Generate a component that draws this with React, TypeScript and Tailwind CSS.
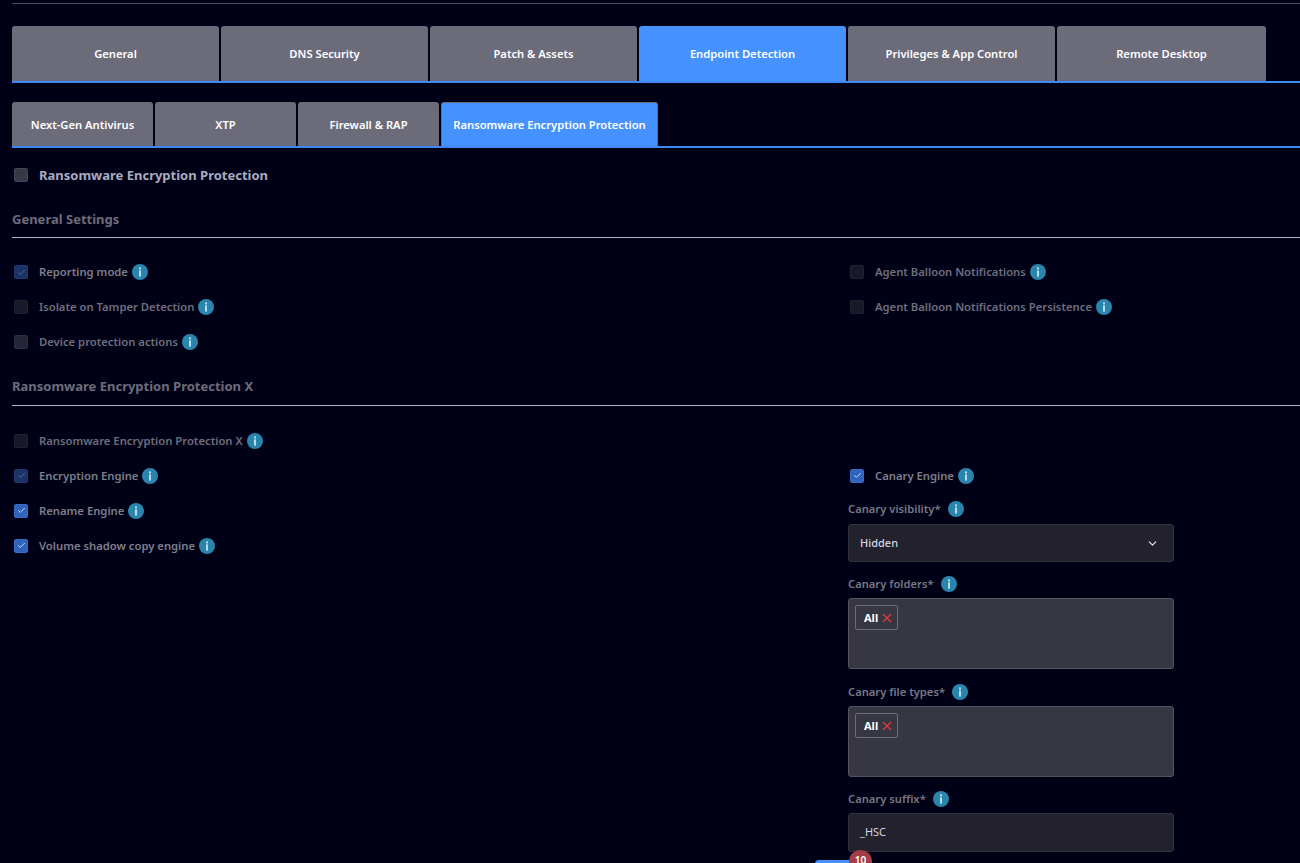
import { ChevronDown, Check } from "lucide-react";

const mainTabs = ["General", "DNS Security", "Patch & Assets", "Endpoint Detection", "Privileges & App Control", "Remote Desktop"];
const subTabs = [
	{ name: "Next-Gen Antivirus", width: "w-[141px]" },
	{ name: "XTP", width: "w-[141px]" },
	{ name: "Firewall & RAP", width: "w-[141px]" },
	{ name: "Ransomware Encryption Protection", width: "w-[217px]" },
];

const Info = ({ className = "" }: { className?: string }) => (
	<span className={`flex h-4 w-4 shrink-0 items-center justify-center rounded-full bg-[#2a85ad] ${className}`}>
		<svg width="16" height="16" viewBox="0 0 16 16" aria-hidden="true">
			<rect x="7" y="3.4" width="2" height="2" fill="#b9dcea" />
			<rect x="7" y="6.4" width="2" height="6.2" fill="#b9dcea" />
		</svg>
	</span>
);

type BoxState = "off" | "offDim" | "checked" | "checkedDim" | "main";

const boxStyles: Record<BoxState, string> = {
	off: "bg-[#25253a] border-[#2e2e42]",
	offDim: "bg-[#171828] border-[#222233]",
	checked: "bg-[#2f63bd] border-[#3a6cc4]",
	checkedDim: "bg-[#1a3266] border-[#1f3a70]",
	main: "bg-[#383746] border-[#45445a]",
};

const CheckRow = ({ label, state, dim }: { label: string; state: BoxState; dim?: boolean }) => (
	<div className="flex h-[35px] items-center">
		<span className={`ml-[2px] flex h-[14px] w-[14px] items-center justify-center rounded-[2px] border ${boxStyles[state]}`}>
			{state === "checked" && <Check size={9} strokeWidth={2.5} color="#d0dcf2" />}
			{state === "checkedDim" && <Check size={9} strokeWidth={2.5} color="#5f6f92" />}
		</span>
		<span className={`ml-[11px] pt-[1px] text-[11.25px] font-semibold ${dim ? "text-[#6f6e7d]" : "text-[#7f7e8c]"}`}>{label}</span>
		<Info className="ml-1" />
	</div>
);

const Heading = ({ children, className }: { children: string; className: string }) => (
	<div className={`border-b border-[#b4b6c4] text-[13px] font-bold text-[#6d6c7a] ${className}`}>{children}</div>
);

const FieldLabel = ({ label }: { label: string }) => (
	<div className="flex h-[16px] items-center text-[11.2px] font-semibold text-[#787785]">
		{label}
		<Info className="ml-[7px]" />
	</div>
);

const Chip = () => (
	<span className="flex h-[25px] w-[43px] items-center gap-1 rounded-[2px] border border-[#6d6c7a] pl-[8px] text-[11px] font-bold text-white">
		<span className="pt-[1px]">All</span>
		<svg width="10" height="10" viewBox="0 0 10 10" aria-hidden="true">
			<path d="M1 1 L9 9 M9 1 L1 9" stroke="#e5393f" strokeWidth="1.3" fill="none" />
		</svg>
	</span>
);

const MultiBox = () => (
	<div className="mt-[6px] h-[71px] rounded-[3px] border border-[#55545f] bg-[#373643] p-[6px]">
		<Chip />
	</div>
);

export default function App() {
	return (
		<div
			className="relative h-screen overflow-hidden bg-[#000116] pl-3 pt-[3px]"
			style={{ fontFamily: '"Noto Sans", sans-serif' }}
		>
			<div className="h-px bg-[#4d4c5c]" />

			<div className="mt-[22px] flex gap-[2px] border-b-2 border-[#3f88f5]">
				{mainTabs.map((tab, i) => (
					<div
						key={tab}
						className={`flex h-[55px] items-center justify-center rounded-t-[3px] pt-[2px] text-[11.2px] font-semibold text-white ${i === 5 ? "w-[209px]" : "w-[207px]"} ${i === 3 ? "bg-[#4592ff]" : "bg-[#6c6b7a]"}`}
					>
						{tab}
					</div>
				))}
			</div>

			<div className="mt-[19px] flex gap-[2px] border-b-2 border-[#3f88f5]">
				{subTabs.map((tab, i) => (
					<div
						key={tab.name}
						className={`flex h-[44px] items-center justify-center rounded-t-[3px] pt-[2px] text-[11.2px] font-semibold text-white ${tab.width} ${i === 3 ? "bg-[#4592ff] border-x border-t border-[#6c6b7a]" : "bg-[#6c6b7a]"}`}
					>
						{tab.name}
					</div>
				))}
			</div>

			<div className="mt-5 flex h-[14px] items-center">
				<span className={`ml-[2px] h-[14px] w-[14px] rounded-[2px] border ${boxStyles.main}`} />
				<span className="ml-[11px] pt-[1px] text-[13px] font-bold text-[#a9abc0]">Ransomware Encryption Protection</span>
			</div>

			<Heading className="mt-[28px] pb-[7px]">General Settings</Heading>

			<div className="mt-[17px] grid grid-cols-[836px_1fr]">
				<div>
					<CheckRow label="Reporting mode" state="checkedDim" />
					<CheckRow label="Isolate on Tamper Detection" state="offDim" dim />
					<CheckRow label="Device protection actions" state="off" dim />
				</div>
				<div>
					<CheckRow label="Agent Balloon Notifications" state="offDim" dim />
					<CheckRow label="Agent Balloon Notifications Persistence" state="offDim" dim />
				</div>
			</div>

			<Heading className="mt-[17px] pb-[9px]">Ransomware Encryption Protection X</Heading>

			<div className="mt-[17px] grid grid-cols-[836px_1fr]">
				<div>
					<CheckRow label="Ransomware Encryption Protection X" state="offDim" dim />
					<CheckRow label="Encryption Engine" state="checkedDim" />
					<CheckRow label="Rename Engine" state="checked" />
					<CheckRow label="Volume shadow copy engine" state="checked" />
				</div>
				<div className="w-[326px] pt-[35px]">
					<CheckRow label="Canary Engine" state="checked" />

					<div className="mt-[8px]">
						<FieldLabel label="Canary visibility*" />
						<div className="mt-[7px] flex h-[38px] items-center justify-between rounded-[3px] border border-[#33323e] bg-[#22212c] pl-[11px] pr-[14px] text-[11px] font-medium text-[#d5d6e2]">
							Hidden
							<ChevronDown size={13} strokeWidth={2.2} color="#e4e4ea" />
						</div>
					</div>

					<div className="mt-[14px]">
						<FieldLabel label="Canary folders*" />
						<MultiBox />
					</div>

					<div className="mt-[15px]">
						<FieldLabel label="Canary file types*" />
						<MultiBox />
					</div>

					<div className="mt-[14px]">
						<FieldLabel label="Canary suffix*" />
						<div className="mt-[6px] flex h-[39px] items-center rounded-[3px] border border-[#33323e] bg-[#22212c] pl-[11px] text-[11px] text-[#d5d6e2]">
							_HSC
						</div>
					</div>
				</div>
			</div>

			<div className="absolute left-[815px] top-[860px] h-5 w-[46px] rounded-t-[4px] bg-[#4592ff]" />
			<div className="absolute left-[849px] top-[850px] flex h-[23px] w-[23px] justify-center rounded-full bg-[#a33e48] pt-[3px] text-[10px] font-semibold text-white">
				10
			</div>
		</div>
	);
}
